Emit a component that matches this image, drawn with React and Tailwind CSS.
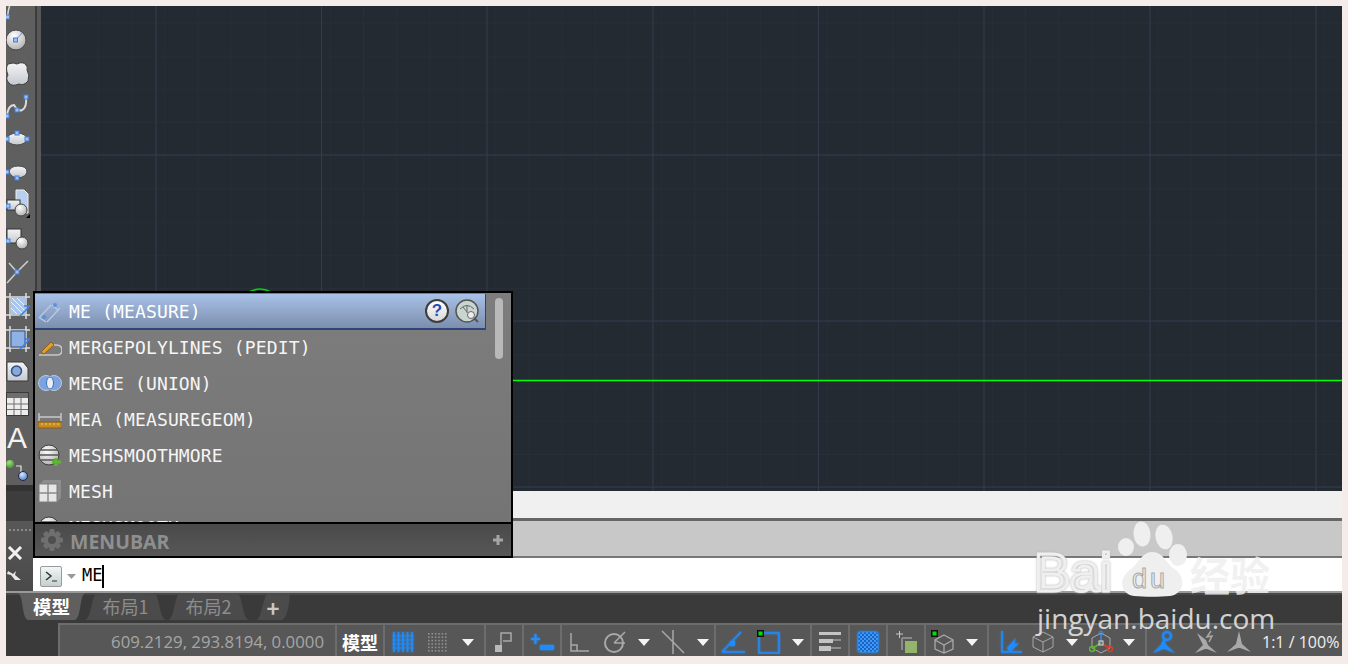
import React from 'react';

const CJK = "font-['Noto_Sans_CJK_SC','Noto_Sans',sans-serif]";
const MONO = "font-['DejaVu_Sans_Mono',monospace]";

// ===== Shared svg bits =====
function Defs() {
  return (
    <svg className="absolute w-0 h-0">
      <defs>
        <linearGradient id="lite" x1="0" y1="0" x2="0" y2="1">
          <stop offset="0" stopColor="#f4f4f4" />
          <stop offset="1" stopColor="#c4c9d0" />
        </linearGradient>
        <radialGradient id="ball" cx="0.4" cy="0.3" r="0.8">
          <stop offset="0" stopColor="#ffffff" />
          <stop offset="1" stopColor="#a8a8a8" />
        </radialGradient>
        <radialGradient id="green" cx="0.4" cy="0.3" r="0.8">
          <stop offset="0" stopColor="#a5e07e" />
          <stop offset="1" stopColor="#3e8f2a" />
        </radialGradient>
        <radialGradient id="blue" cx="0.4" cy="0.3" r="0.8">
          <stop offset="0" stopColor="#d8e8ff" />
          <stop offset="1" stopColor="#3f78c8" />
        </radialGradient>
        <pattern id="checker" width="4" height="4" patternUnits="userSpaceOnUse">
          <rect width="4" height="4" fill="#1c62b8" />
          <rect width="2" height="2" fill="#3d9bff" />
          <rect x="2" y="2" width="2" height="2" fill="#3d9bff" />
        </pattern>
      </defs>
    </svg>
  );
}

const Node = ({ x, y }) => (
  <rect x={x - 2} y={y - 2} width="4" height="4" fill="#9fc0ee" stroke="#3f7fdc" strokeWidth="1" />
);

// ===== Left draw toolbar =====
const TOOLS = [
  <>
    <path d="M6 -6 Q2 2 1.5 11" fill="none" stroke="#d8d8d8" strokeWidth="1.5" />
    <Node x={1.5} y={11} />
  </>,
  <>
    <circle cx="10" cy="16" r="10" fill="url(#ball)" stroke="#4a4a4a" />
    <path d="M10 16 L16 9" stroke="#5b93e4" />
    <Node x={9.5} y={16} />
  </>,
  <path d="M2 7 Q8 5 11 7 Q17 4 20 8 Q22 10 21 13 Q24 18 22 24 Q18 29 13 27 Q6 30 3 26 Q-1 22 2 18 Q-1 11 2 7Z" fill="url(#lite)" stroke="#3f3f3f" />,
  <>
    <path d="M1 26 Q2 15 8 15 Q12 22 16 20 Q21 18 20 7" fill="none" stroke="#dcdcdc" strokeWidth="2" />
    <Node x={1} y={26} />
    <Node x={11} y={20} />
    <Node x={20} y={7} />
  </>,
  <>
    <ellipse cx="11" cy="16" rx="10" ry="6" fill="url(#lite)" stroke="#4a4a4a" />
    <Node x={1} y={16} />
    <Node x={11} y={10} />
    <Node x={21} y={16} />
  </>,
  <>
    <path d="M3 16 Q4 10 12 10 Q21 10 21 16 Q20 21 12 22 Q6 22 3 16Z" fill="url(#lite)" stroke="#4a4a4a" />
    <Node x={1} y={16} />
    <Node x={11} y={22} />
  </>,
  <>
    <path d="M10 1 H18 L22 5 V24 H10Z" fill="#b8d0ee" stroke="#efefef" />
    <rect x="1" y="11" width="13" height="10" fill="url(#lite)" stroke="#333" />
    <circle cx="15" cy="21" r="6" fill="url(#ball)" stroke="#444" />
    <Node x={2} y={17} />
    <path d="M20 29 L24 25 V29Z" fill="#000" />
  </>,
  <>
    <rect x="1" y="7" width="14" height="14" fill="url(#lite)" stroke="#333" />
    <circle cx="16" cy="21" r="6" fill="url(#ball)" stroke="#444" />
    <Node x={2} y={19} />
  </>,
  <>
    <path d="M1 28 L11 17 L22 6 M3 8 L11 17" fill="none" stroke="#cfcfcf" strokeWidth="1.5" />
    <Node x={11} y={17} />
  </>,
  <>
    <path d="M0 9 H24 M0 27 H24 M4 5 V31 M20 5 V31" stroke="#dedede" strokeWidth="1.5" fill="none" />
    <rect x="5" y="10" width="14" height="16" fill="#a9c6ee" />
    <path d="M6 10 L19 23 M5 14 L17 26 M11 10 L19 18 M5 20 L11 26" stroke="#eef3fb" />
    <path d="M14 28 L24 18 M18 18 H24" stroke="#3f7fdc" strokeWidth="1.5" fill="none" />
  </>,
  <>
    <path d="M0 9 H24 M0 27 H24 M4 5 V31 M20 5 V31" stroke="#dedede" strokeWidth="1.5" fill="none" />
    <rect x="5" y="10" width="14" height="16" fill="#8fb2e4" stroke="#2f4f88" />
    <path d="M14 28 L24 18 M18 18 H24" stroke="#3f7fdc" strokeWidth="1.5" fill="none" />
  </>,
  <>
    <path d="M1 8 H17 L22 14 V27 H1Z" fill="url(#lite)" stroke="#3a3a3a" />
    <circle cx="10.5" cy="17" r="5" fill="#88a8d8" stroke="#2f4f88" strokeWidth="1.5" />
  </>,
  <>
    <rect x="0.5" y="5.5" width="22" height="23" fill="#ededed" stroke="#3a3a3a" />
    <rect x="1" y="6" width="21" height="5" fill="#6e6e6e" />
    <path d="M1 17 H22 M1 22.5 H22 M8 11 V28 M15 11 V28" stroke="#6f6f6f" />
  </>,
  <text x="1" y="28" fontSize="30" fill="#f2f2f2" fontFamily="Liberation Sans, sans-serif">A</text>,
  <>
    <circle cx="4" cy="11" r="4" fill="url(#green)" />
    <path d="M10 13 H15 V19" fill="none" stroke="#e4e4e4" strokeWidth="1.2" />
    <circle cx="17" cy="23" r="4.5" fill="url(#blue)" stroke="#1c2a40" />
  </>,
];

function Toolbar() {
  return (
    <div className="w-[35px] shrink-0 flex flex-col">
      <div className="flex flex-1 min-h-0">
        <div className="w-[29px] bg-[#5f5f5f] flex flex-col overflow-hidden">
          {TOOLS.map((tool, i) => (
            <svg key={i} width="29" height={i === 0 ? 18 : 33} className="shrink-0 overflow-visible">
              {tool}
            </svg>
          ))}
        </div>
        <div className="w-[2px] bg-[#3c3c3c]" />
        <div className="w-[4px] bg-[#585858]" />
      </div>
      <div className="h-[6px] bg-[#333333]" />
    </div>
  );
}

// ===== Canvas grid =====
function Canvas() {
  const minorX = [];
  const minorY = [];
  for (let i = 0; i < 42; i++) minorX.push(-8.5 + i * 33.1);
  for (let i = 0; i < 16; i++) minorY.push(17 + i * 33.2);
  const majorX = [115, 280.5, 446, 612, 777.5, 943, 1109, 1275];
  const majorY = [149, 315, 481];
  return (
    <div className="relative flex-1 bg-[#232a32] overflow-hidden">
      <svg className="absolute inset-0 w-full h-full">
        {minorX.map(x => <line key={x} x1={x} x2={x} y1="0" y2="485" stroke="#292e39" />)}
        {minorY.map(y => <line key={y} x1="0" x2="1301" y1={y} y2={y} stroke="#292e39" />)}
        {majorX.map(x => <line key={x} x1={x} x2={x} y1="0" y2="485" stroke="#363a4c" />)}
        {majorY.map(y => <line key={y} x1="0" x2="1301" y1={y} y2={y} stroke="#363a4c" />)}
        <line x1="0" x2="1301" y1="374.5" y2="374.5" stroke="#00ff00" strokeWidth="1.6" />
        <path d="M208 286 Q219 280 230 286" fill="none" stroke="#00d800" strokeWidth="1.5" />
      </svg>
    </div>
  );
}

// ===== Autocomplete popup =====
const MeasureIcon = () => (
  <svg width="24" height="24" className="shrink-0">
    <path d="M1 19 L13 6 M9 23 L22 9 M14 6 L20 11 M2 19 L8 23" stroke="#b9cbe6" strokeWidth="1.2" fill="none" />
    <circle cx="17" cy="6" r="2" fill="#5f8fd8" />
    <circle cx="6" cy="18" r="2" fill="#5f8fd8" />
  </svg>
);
const PolyIcon = () => (
  <svg width="24" height="24" className="shrink-0">
    <path d="M1 20 H19 Q24 20 24 15 Q24 10 18 10 H12" fill="none" stroke="#c8c8c8" strokeWidth="1.6" />
    <path d="M3 17 L13 7 L16 10 L6 19Z" fill="#e0a028" stroke="#7a4a10" strokeWidth="0.7" />
  </svg>
);
const UnionIcon = () => (
  <svg width="24" height="24" className="shrink-0">
    <circle cx="8" cy="12" r="7.5" fill="#7ba3de" stroke="#b8cdec" />
    <circle cx="16" cy="12" r="7.5" fill="#7ba3de" stroke="#b8cdec" />
    <ellipse cx="12" cy="12" rx="3.5" ry="6" fill="#e8eef8" stroke="#3f6cb4" />
  </svg>
);
const RulerIcon = () => (
  <svg width="24" height="24" className="shrink-0">
    <path d="M1 6 V14 M23 6 V14 M1 10 H23" stroke="#c8c8c8" strokeWidth="1.4" />
    <rect x="0" y="15" width="24" height="6" fill="#c98a20" stroke="#8a5c10" />
    <path d="M4 16 V18 M8 16 V18 M12 16 V18 M16 16 V18 M20 16 V18" stroke="#f2d08a" />
  </svg>
);
const SphereIcon = () => (
  <svg width="24" height="24" className="shrink-0">
    <circle cx="11" cy="12" r="10" fill="url(#ball)" stroke="#3f3f3f" />
    <path d="M1 12 H21 M3 7 H19 M3 17 H19" stroke="#555" strokeWidth="1.5" fill="none" />
    <path d="M18 15 V23 M14 19 H23" stroke="#5cb82e" strokeWidth="3" />
  </svg>
);
const MeshIcon = () => (
  <svg width="24" height="24" className="shrink-0">
    <path d="M2 5 L6 1 H23 V19 L19 23Z" fill="#8d8d8d" />
    <rect x="1" y="5" width="18" height="18" fill="#e6e6e6" stroke="#7d7d7d" />
    <path d="M10 5 V23 M1 14 H19" stroke="#8a8a8a" strokeWidth="1.5" />
  </svg>
);

const ITEMS = [
  { icon: PolyIcon, label: 'MERGEPOLYLINES (PEDIT)' },
  { icon: UnionIcon, label: 'MERGE (UNION)' },
  { icon: RulerIcon, label: 'MEA (MEASUREGEOM)' },
  { icon: SphereIcon, label: 'MESHSMOOTHMORE' },
  { icon: MeshIcon, label: 'MESH' },
  { icon: SphereIcon, label: 'MESHSMOOTH' },
];

function Popup() {
  return (
    <div className="absolute left-[33px] top-[291px] w-[480px] h-[267px] border-2 border-black bg-[#777777] flex flex-col">
      <div className="relative flex-1 min-h-0 overflow-hidden bg-gradient-to-b from-[#7d7d7d] to-[#747474]">
        <div className="relative h-[36px] w-[451px] mt-[1px] -mb-[1px] pl-[3px] pr-[6px] flex items-center gap-[7px] border-b-2 border-r border-[#2f4479] bg-gradient-to-b from-[#a9c2e8] to-[#7c8eae]">
          <MeasureIcon />
          <span className={`${MONO} pt-[1px] text-[18px] tracking-[0.15px] text-white flex-1 whitespace-pre`}>ME (MEASURE)</span>
          <span className="w-[24px] h-[24px] rounded-full bg-gradient-to-b from-white to-[#d8d8d8] border-2 border-[#3d3d3d] flex items-center justify-center text-[#2050b8] text-[17px] font-bold font-['Liberation_Sans',sans-serif]">?</span>
          <svg width="24" height="24" className="shrink-0 -ml-[1px]">
            <circle cx="12" cy="12" r="11" fill="#c9d6d0" stroke="#555" strokeWidth="1.5" />
            <path d="M5 10 Q12 3 19 10 M12 6 V14 M8 8 L12 13" stroke="#666" fill="none" />
            <circle cx="16" cy="16" r="3.5" fill="#eee" stroke="#666" />
            <path d="M19 19 L23 23" stroke="#555" strokeWidth="2" />
          </svg>
        </div>
        {ITEMS.map(item => {
          const Icon = item.icon;
          return (
            <div key={item.label} className="h-[36px] pl-[3px] flex items-center gap-[7px] shrink-0">
              <Icon />
              <span className={`${MONO} pt-[1px] text-[18px] tracking-[0.15px] text-[#f5f5f5] whitespace-pre`}>{item.label}</span>
            </div>
          );
        })}
        <div className="absolute left-[460px] top-[5px] w-[8px] h-[61px] rounded-full bg-[#b9b9b9]" />
      </div>
      <div className="h-[34px] shrink-0 border-t-2 border-black bg-gradient-to-b from-[#4a4a4a] to-[#575757] pl-[5px] pr-[8px] flex items-center">
        <svg width="24" height="24" viewBox="0 0 24 24" className="shrink-0">
          <path d="M10 1 H14 L15 5 L18 3 L21 6 L19 9 L23 10 V14 L19 15 L21 18 L18 21 L15 19 L14 23 H10 L9 19 L6 21 L3 18 L5 15 L1 14 V10 L5 9 L3 6 L6 3 L9 5Z" fill="#6f6f6f" />
          <circle cx="12" cy="12" r="4" fill="#4f4f4f" />
        </svg>
        <span className="ml-[6px] pt-[3px] text-[19.5px] font-bold text-[#8f8f8f] font-['Open_Sans',sans-serif] flex-1">MENUBAR</span>
        <svg width="10" height="10" className="shrink-0">
          <path d="M5 0 V10 M0 5 H10" stroke="#a5a5a5" strokeWidth="3" />
        </svg>
      </div>
    </div>
  );
}

// ===== Command area =====
function CommandArea() {
  return (
    <div className="flex h-[100px]">
      <div className="w-[27px] shrink-0 flex flex-col bg-[#3d3d3d] text-white">
        <div className="h-[30px]" />
        <div className="flex-1 bg-gradient-to-b from-[#585858] to-[#4a4a4a] flex flex-col items-center overflow-hidden">
          <div className="mt-[8px] w-[22px] border-t-2 border-dotted border-[#8a8a8a]" />
          <svg width="16" height="14" className="mt-[15px] self-start ml-[1px] shrink-0">
            <path d="M2 1 L14 13 M14 1 L2 13" stroke="#f2f2f2" strokeWidth="3" />
          </svg>
          <svg width="16" height="12" className="mt-[9px] self-start shrink-0">
            <path d="M2 2 L7 5 L10 2 L9 6 L15 11 H9 L5 6 L1 5Z" fill="#e8e8e8" />
          </svg>
        </div>
      </div>
      <div className="flex-1 flex flex-col">
        <div className="h-[27px] bg-[#f0f0f0]" />
        <div className="h-[3px] bg-[#666666]" />
        <div className="h-[35px] bg-[#c8c8c8]" />
        <div className="h-[2px] bg-[#777777]" />
        <div className="flex-1 bg-white flex items-center pl-[7px] pt-[3px]">
          <div className="w-[22px] h-[21px] rounded-[2px] border border-[#9a9a9a] bg-gradient-to-b from-[#f2f6f6] to-[#c4d0d0] flex items-center justify-center">
            <svg width="16" height="13">
              <path d="M3 2 L8 6 L3 10" fill="none" stroke="#333" strokeWidth="1.5" />
              <path d="M9 11 H14" stroke="#333" />
            </svg>
          </div>
          <svg width="10" height="5" className="ml-[5px]"><path d="M0 0 H9 L4.5 5Z" fill="#9a9a9a" /></svg>
          <span className={`${MONO} ml-[5px] text-[17px] text-black`}>ME</span>
          <span className="w-[2px] h-[23px] bg-black" />
        </div>
      </div>
    </div>
  );
}

// ===== Layout tabs =====
function Tab({ d, width, fill, children }) {
  return (
    <div className={`relative h-[27px] flex items-center justify-center shrink-0 ${width}`}>
      <svg className="absolute inset-0 w-full h-full" preserveAspectRatio="none" viewBox="0 0 100 27">
        <path d={d} fill={fill} />
      </svg>
      <span className="relative">{children}</span>
    </div>
  );
}

function Tabs() {
  const inactive = 'M0 27 C10 27 8 2 16 0 H84 C92 2 90 27 100 27Z';
  return (
    <div className={`h-[32px] shrink-0 bg-[#3a3a3a] border-t-2 border-[#9a9a9a] ${CJK}`}>
      <div className="h-[2px] bg-[#474747]" />
      <div className="flex pl-[11px] items-start -mt-[2px]">
        <Tab width="w-[69px] text-white font-bold text-[18.5px]" fill="#5f5f5f" d="M0 0 C10 0 6 25 16 27 H84 C94 25 90 0 100 0Z">模型</Tab>
        <Tab width="w-[83px] -ml-[2px] text-[#8d8d8d] text-[18px]" fill="#4b4b4b" d={inactive}>布局1</Tab>
        <Tab width="w-[83px] text-[#8d8d8d] text-[18px]" fill="#4b4b4b" d={inactive}>布局2</Tab>
        <Tab width="w-[34px] ml-[6px] text-[#c8c8c8] font-bold text-[22px] leading-none" fill="#4b4b4b" d="M0 27 C18 26 20 2 36 0 H100 C98 12 92 25 76 27Z">+</Tab>
      </div>
    </div>
  );
}

// ===== Status bar =====
const Tri = ({ cls }) => (
  <svg width="12" height="7" className={`shrink-0 ${cls}`}><path d="M0 0 H12 L6 7Z" fill="#f4f4f4" /></svg>
);

const Ico = ({ cls = '', children }) => (
  <svg width="24" height="24" className={`shrink-0 ${cls}`}>{children}</svg>
);

const GLOW = 'drop-shadow-[0_0_1px_#1e90ff]';
const GRAY = '#a9a9a9';

function Cell({ width, children, center }) {
  return (
    <div className={`${width} h-full shrink-0 border-l-2 border-[#6d6d6d] pt-[3px] flex items-center ${center ? 'justify-center' : ''}`}>
      {children}
    </div>
  );
}

const dots = [];
for (let y = 3; y < 22; y += 3.4) for (let x = 2; x < 22; x += 3.4) dots.push([x, y]);

function StatusBar() {
  return (
    <div className="h-[33px] shrink-0 flex bg-[#3a3a3a]">
      <div className="w-[52px] shrink-0" />
      <div className="flex-1 flex bg-[#575757] border-t-2 border-[#6d6d6d]">
        <div className="w-[274px] h-full shrink-0 border-l-2 border-[#6d6d6d] pt-[3px] flex items-center justify-end pr-[8px] text-[16.8px] text-[#a6a6a6] font-['Open_Sans',sans-serif] whitespace-nowrap">
          609.2129, 293.8194, 0.0000
        </div>
        <div className={`w-[48px] h-full shrink-0 ml-[3px] border-l-2 border-[#6d6d6d] pt-[3px] flex items-center pl-[5px] text-[18px] font-bold text-white ${CJK}`}>模型</div>

        <Cell width="w-[99px]">
          <Ico cls={`ml-[6px] ${GLOW}`}>
            <path d="M3 2 V22 M7.5 2 V22 M12 2 V22 M16.5 2 V22 M21 2 V22" stroke="#1e8cff" strokeWidth="1.6" />
            <path d="M1 6 H23 M1 10 H23 M1 14 H23 M1 18 H23" stroke="#1e8cff" strokeWidth="0.7" />
          </Ico>
          <Ico cls="ml-[11px]">
            {dots.map(([x, y]) => <rect key={`${x}-${y}`} x={x} y={y} width="1.6" height="1.6" fill="#8f8f8f" />)}
          </Ico>
          <Tri cls="ml-[12px]" />
        </Cell>

        <div className="w-[2px] shrink-0" />
        <Cell width="w-[38px]" center>
          <Ico>
            <path d="M9 20 V3 H19 V11 H11" fill="none" stroke={GRAY} strokeWidth="1.5" />
            <rect x="3" y="15" width="7" height="7" fill="#b8b8b8" />
          </Ico>
        </Cell>
        <Cell width="w-[38px]" center>
          <Ico cls={GLOW}>
            <path d="M1 9 H10 M5.5 4 V14" stroke="#2a8cf5" strokeWidth="2" />
            <rect x="10" y="15" width="14" height="5" rx="1" fill="#1e8cff" />
          </Ico>
        </Cell>

        <Cell width="w-[154px]">
          <Ico cls="ml-[5px]">
            <path d="M4 3 V21 H22 M4 15 H10 V21" fill="none" stroke={GRAY} strokeWidth="1.5" />
          </Ico>
          <Ico cls="ml-[12px]">
            <circle cx="11" cy="13" r="9" fill="none" stroke={GRAY} strokeWidth="2" />
            <path d="M11 13 H22 M11 13 L22 2" stroke={GRAY} strokeWidth="1.5" />
          </Ico>
          <Tri cls="ml-[11px]" />
          <Ico cls="ml-[11px]">
            <path d="M1 1 L23 23 M12 0 V24" stroke={GRAY} strokeWidth="1.5" />
          </Ico>
          <Tri cls="ml-[12px]" />
        </Cell>

        <Cell width="w-[96px]">
          <Ico cls={`ml-[5px] ${GLOW}`}>
            <path d="M1 22 L20 2 M1 22 H24" stroke="#1e8cff" strokeWidth="1.5" />
            <rect x="9" y="11" width="5" height="5" fill="#1e8cff" />
          </Ico>
          <Ico cls="ml-[12px]">
            <rect x="2" y="3" width="20" height="20" fill="none" stroke="#1e8cff" strokeWidth="1.5" className={GLOW} />
            <rect x="0" y="0" width="7" height="7" fill="#111" />
            <rect x="1.5" y="1.5" width="4" height="4" fill="#00e000" />
          </Ico>
          <Tri cls="ml-[11px]" />
        </Cell>
        <Cell width="w-[38px]" center>
          <Ico>
            <rect x="1" y="2" width="22" height="3" fill="#c4c4c4" />
            <rect x="1" y="9" width="14" height="4" fill="#c4c4c4" />
            <path d="M15 10 H23" stroke="#c4c4c4" />
            <rect x="1" y="16" width="12" height="5" fill="#c4c4c4" />
            <path d="M13 18 H23" stroke="#c4c4c4" />
          </Ico>
        </Cell>
        <Cell width="w-[38px]" center>
          <Ico cls={GLOW}>
            <rect x="2" y="2" width="20" height="20" rx="2" fill="url(#checker)" stroke="#2a8cf5" />
          </Ico>
        </Cell>
        <Cell width="w-[38px]" center>
          <Ico>
            <path d="M2 4 H9 M5.5 1 V8" stroke="#c8c8c8" />
            <path d="M8 8 H18 M8 8 V20" stroke="#9a9a9a" strokeWidth="1.5" fill="none" />
            <rect x="11" y="11" width="12" height="12" fill="#93b46a" />
          </Ico>
        </Cell>
        <Cell width="w-[60px]">
          <Ico cls="ml-[5px]">
            <path d="M13 5 L22 10 V19 L13 23 L4 19 V10Z M4 10 L13 15 L22 10 M13 15 V23" fill="none" stroke={GRAY} strokeWidth="1.3" />
            <rect x="0" y="0" width="7" height="7" fill="#111" />
            <rect x="1.5" y="1.5" width="4" height="4" fill="#00e000" />
          </Ico>
          <Tri cls="ml-[11px]" />
        </Cell>

        <div className="w-[3px] shrink-0" />
        <Cell width="w-[158px]">
          <Ico cls={`ml-[10px] ${GLOW}`}>
            <path d="M3 1 V22 H23" fill="none" stroke="#1e8cff" strokeWidth="1.5" />
            <path d="M8 18 L17 8 L15 14 L20 13 L11 22Z" fill="#1e8cff" />
          </Ico>
          <Ico cls="ml-[8px]">
            <path d="M12 2 L22 7 V17 L12 22 L2 17 V7Z M2 7 L12 12 L22 7 M12 12 V22" fill="none" stroke={GRAY} />
          </Ico>
          <Tri cls="ml-[11px]" />
          <Ico cls="ml-[11px]">
            <path d="M12 3 L21 8 V18 L12 23 L3 18 V8Z" fill="none" stroke={GRAY} />
            <path d="M12 13 V4" stroke="#3f8ae6" strokeWidth="1.5" />
            <path d="M12 13 L4 18" stroke="#5cb82e" strokeWidth="1.5" />
            <path d="M12 13 L20 18" stroke="#d8402a" strokeWidth="1.5" />
            <circle cx="12" cy="3" r="2" fill="none" stroke="#3f8ae6" />
            <circle cx="3" cy="19" r="2.5" fill="none" stroke="#5cb82e" strokeWidth="1.5" />
            <circle cx="21" cy="19" r="2.5" fill="none" stroke="#d8402a" strokeWidth="1.5" />
            <rect x="10" y="11" width="4" height="4" fill="none" stroke="#ddd" />
          </Ico>
          <Tri cls="ml-[10px]" />
        </Cell>
        <div className="flex-1 h-full border-l-2 border-[#6d6d6d] pt-[3px] flex items-center">
          <Ico cls={`ml-[5px] ${GLOW}`}>
            <path d="M12 8 L14 15 L23 23 L13 19 L11 19 L1 23 L9 15Z" fill="#1e8cff" />
            <circle cx="15" cy="6" r="4" fill="none" stroke="#1e8cff" strokeWidth="2" />
          </Ico>
          <Ico cls="ml-[18px]">
            <path d="M12 10 L14 15 L23 23 L13 19 L11 19 L1 23 L9 15 L3 3 L12 10Z" fill="#a9a9a9" />
            <path d="M17 1 L13 7 L18 6 L15 12" fill="none" stroke="#a9a9a9" strokeWidth="1.5" />
          </Ico>
          <Ico cls="ml-[9px]">
            <path d="M12 1 L15 14 L24 22 L13 18 L11 18 L0 22 L9 14Z" fill="#a9a9a9" />
          </Ico>
          <span className="ml-[11px] text-[16px] text-[#f0f0f0] font-['Open_Sans',sans-serif] whitespace-nowrap">1:1 / 100%</span>
        </div>
      </div>
    </div>
  );
}

// ===== Baidu watermark =====
function Watermark() {
  return (
    <div className="absolute left-[1030px] top-[520px] w-[255px] h-[114px] pointer-events-none">
      <span className="absolute left-[4px] top-[20px] text-[54px] leading-[64px] font-['Liberation_Sans',sans-serif] text-transparent [-webkit-text-stroke:3px_#efefef] drop-shadow-[0_0_1px_#b4b4b4]">Bai</span>
      <svg width="90" height="84" className="absolute left-[84px] top-0">
        <g fill="#efefef">
          <ellipse cx="28" cy="14" rx="8.5" ry="12.5" transform="rotate(-6 28 14)" />
          <ellipse cx="50" cy="17" rx="8.5" ry="12.5" transform="rotate(-12 50 17)" />
          <ellipse cx="12" cy="27" rx="8" ry="9" />
          <ellipse cx="64" cy="35" rx="9" ry="11" />
          <path d="M38 32 C50 32 52 44 62 50 C72 58 70 74 56 76 C46 77 30 77 20 76 C6 74 4 58 16 50 C24 44 28 32 38 32Z" />
        </g>
      </svg>
      <span className="absolute left-[102px] top-[43px] text-[27px] leading-[32px] tracking-[3px] font-['Liberation_Sans',sans-serif] text-transparent [-webkit-text-stroke:1px_#a8a8a8]">du</span>
      <span className={`absolute left-[160px] top-[29px] text-[40px] leading-[50px] font-bold text-[#efefef]/85 ${CJK}`}>经验</span>
      <span className="absolute left-[7px] top-[81px] text-[28px] leading-[34px] text-[#e6e6e6]/90 font-['Open_Sans',sans-serif] whitespace-nowrap">jingyan.baidu.com</span>
    </div>
  );
}

export default function App() {
  return (
    <div className="relative w-[1348px] h-[664px] overflow-hidden bg-[#f5ebe9] p-[6px]">
      <Defs />
      <div className="w-full h-full flex flex-col">
        <div className="h-[485px] shrink-0 flex">
          <Toolbar />
          <Canvas />
        </div>
        <CommandArea />
        <Tabs />
        <StatusBar />
      </div>
      <Popup />
      <Watermark />
    </div>
  );
}
